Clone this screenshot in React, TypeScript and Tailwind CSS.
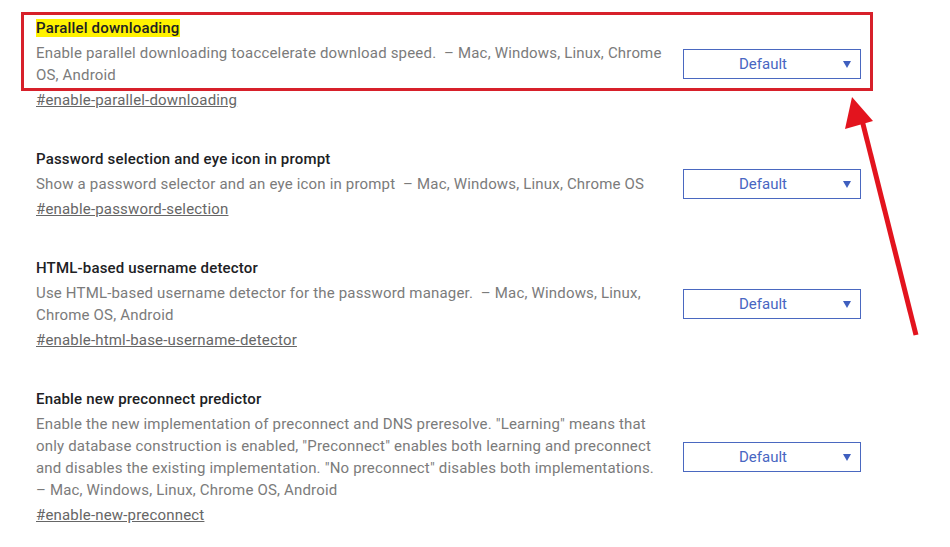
import React from "react";

type Flag = {
  title: string;
  desc: string;
  tag: string;
  highlight?: boolean;
};

const flags: Flag[] = [
  {
    title: "Parallel downloading",
    desc: "Enable parallel downloading toaccelerate download speed.\u00a0 – Mac, Windows, Linux, Chrome OS, Android",
    tag: "#enable-parallel-downloading",
    highlight: true,
  },
  {
    title: "Password selection and eye icon in prompt",
    desc: "Show a password selector and an eye icon in prompt\u00a0 – Mac, Windows, Linux, Chrome OS",
    tag: "#enable-password-selection",
  },
  {
    title: "HTML-based username detector",
    desc: "Use HTML-based username detector for the password manager.\u00a0 – Mac, Windows, Linux, Chrome OS, Android",
    tag: "#enable-html-base-username-detector",
  },
  {
    title: "Enable new preconnect predictor",
    desc: 'Enable the new implementation of preconnect and DNS preresolve. "Learning" means that only database construction is enabled, "Preconnect" enables both learning and preconnect and disables the existing implementation. "No preconnect" disables both implementations.\u00a0 – Mac, Windows, Linux, Chrome OS, Android',
    tag: "#enable-new-preconnect",
  },
];

const Select = () => (
  <div className="relative flex h-[30px] w-[178px] shrink-0 items-center justify-center border border-[#4a68c0] bg-white pr-[18px] text-[15px] text-[#4866c2]">
    <span>Default</span>
    <svg className="absolute right-[9px] top-[11px]" width="8" height="7" viewBox="0 0 8 7">
      <polygon points="0,0 8,0 4,7" fill="#3f5fbf" />
    </svg>
  </div>
);

const FlagRow = ({ flag }: { flag: Flag }) => (
  <div className="flex items-center">
    <div className="w-[632px] tracking-[0.18px]">
      <div className="text-[15px] font-medium leading-[22px] text-[#202124]">
        <span className={flag.highlight ? "bg-[#fff200]" : ""}>{flag.title}</span>
      </div>
      <p className="mt-[3px] text-[15px] leading-[22px] text-[#7b7b7b]">{flag.desc}</p>
      <a className="mt-[3px] block text-[15px] leading-[22px] text-[#666666] underline" href="#">
        {flag.tag}
      </a>
    </div>
    <div className="ml-[15px]">
      <Select />
    </div>
  </div>
);

export default function App() {
  return (
    <div className="relative h-[547px] w-[950px] overflow-hidden bg-white font-['Roboto',sans-serif]">
      <div className="flex flex-col gap-[37px] pl-[36px] pt-[17px]">
        {flags.map((f) => (
          <FlagRow key={f.tag} flag={f} />
        ))}
      </div>
      <div className="absolute left-[21px] top-[12px] h-[79px] w-[852px] border-[3px] border-[#d7202a]" />
      <svg className="absolute left-0 top-0" width="950" height="547" viewBox="0 0 950 547">
        <line x1="916" y1="335" x2="862" y2="120" stroke="#e3141e" strokeWidth="5" />
        <polygon points="852,97 845,129 873,121" fill="#e3141e" />
      </svg>
    </div>
  );
}
